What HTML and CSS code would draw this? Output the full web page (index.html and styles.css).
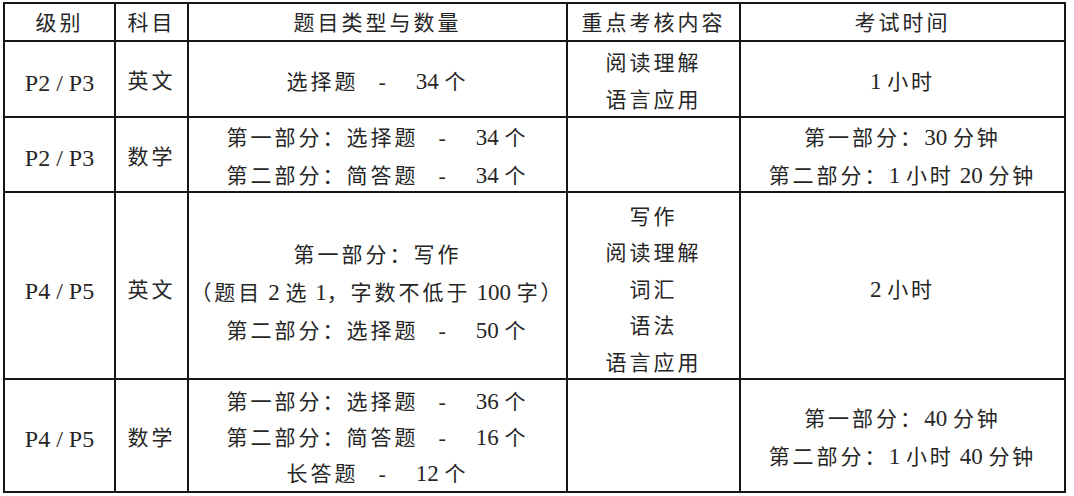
FILE: index.html
```html
<!DOCTYPE html>
<html lang="zh-CN">
<head>
<meta charset="utf-8">
<title>考试安排</title>
<link rel="stylesheet" href="styles.css">
</head>
<body>
<div class="grid">
  <div class="cell head">级别</div>
  <div class="cell head">科目</div>
  <div class="cell head">题目类型与数量</div>
  <div class="cell head">重点考核内容</div>
  <div class="cell head">考试时间</div>

  <div class="cell en"><span class="num">P2 / P3</span></div>
  <div class="cell">英文</div>
  <div class="cell"><div>选择题<span class="dash">-</span><span class="num">34 </span>个</div></div>
  <div class="cell"><div>阅读理解</div><div>语言应用</div></div>
  <div class="cell"><div><span class="num">1 </span>小时</div></div>

  <div class="cell en"><span class="num">P2 / P3</span></div>
  <div class="cell">数学</div>
  <div class="cell"><div>第一部分：选择题<span class="dash">-</span><span class="num">34 </span>个</div><div>第二部分：简答题<span class="dash">-</span><span class="num">34 </span>个</div></div>
  <div class="cell"></div>
  <div class="cell"><div>第一部分：<span class="num">30 </span>分钟</div><div>第二部分：<span class="num">1 </span>小时<span class="num"> 20 </span>分钟</div></div>

  <div class="cell r3 en"><span class="num">P4 / P5</span></div>
  <div class="cell r3">英文</div>
  <div class="cell r3 tall"><div>第一部分：写作</div><div>（题目<span class="num"> 2 </span>选<span class="num"> 1</span>，字数不低于<span class="num"> 100 </span>字）</div><div>第二部分：选择题<span class="dash">-</span><span class="num">50 </span>个</div></div>
  <div class="cell r3 list"><div>写作</div><div>阅读理解</div><div>词汇</div><div>语法</div><div>语言应用</div></div>
  <div class="cell r3"><div><span class="num">2 </span>小时</div></div>

  <div class="cell en"><span class="num">P4 / P5</span></div>
  <div class="cell">数学</div>
  <div class="cell tight"><div>第一部分：选择题<span class="dash">-</span><span class="num">36 </span>个</div><div>第二部分：简答题<span class="dash">-</span><span class="num">16 </span>个</div><div>长答题<span class="dash">-</span><span class="num">12 </span>个</div></div>
  <div class="cell"></div>
  <div class="cell"><div>第一部分：<span class="num">40 </span>分钟</div><div>第二部分：<span class="num">1 </span>小时<span class="num"> 40 </span>分钟</div></div>
</div>
</body>
</html>
```

FILE: styles.css
```css
html, body {
  margin: 0;
  padding: 0;
  background: #ffffff;
}

body {
  padding: 2px 0 0 3px;
  font-family: "Liberation Serif", "Noto Sans CJK SC", serif;
  color: #262626;
}

.grid {
  display: grid;
  grid-template-columns: 109px 71px 377px 171px 323px;
  grid-template-rows: 36px 74px 73px 185px 111px;
  gap: 2px;
  padding: 2px;
  width: max-content;
  background: #161616;
}

.cell {
  background: #ffffff;
  display: flex;
  flex-direction: column;
  align-items: center;
  justify-content: center;
  text-align: center;
  box-sizing: border-box;
  padding-top: 5px;
  font-size: 21px;
  letter-spacing: 3px;
  line-height: 37px;
  white-space: nowrap;
  font-weight: 400;
}

.cell.head {
  line-height: 36px;
  padding-top: 1px;
}

.cell.en {
  padding-top: 8px;
}

.cell.r3 {
  padding-top: 9px;
}

.cell.r3.en {
  padding-top: 12px;
}

.cell.r3.tall {
  padding-top: 15px;
}

.cell.list {
  line-height: 36.5px;
}

.cell.tight {
  line-height: 36px;
  padding-top: 4px;
}

.num {
  font-family: "Liberation Serif", serif;
  font-size: 23px;
  letter-spacing: 0;
  white-space: pre;
}

.cell.en .num {
  font-size: 24px;
}

.dash {
  font-family: "Liberation Serif", serif;
  font-size: 22px;
  letter-spacing: 0;
  margin: 0 30px 0 20px;
}
```
